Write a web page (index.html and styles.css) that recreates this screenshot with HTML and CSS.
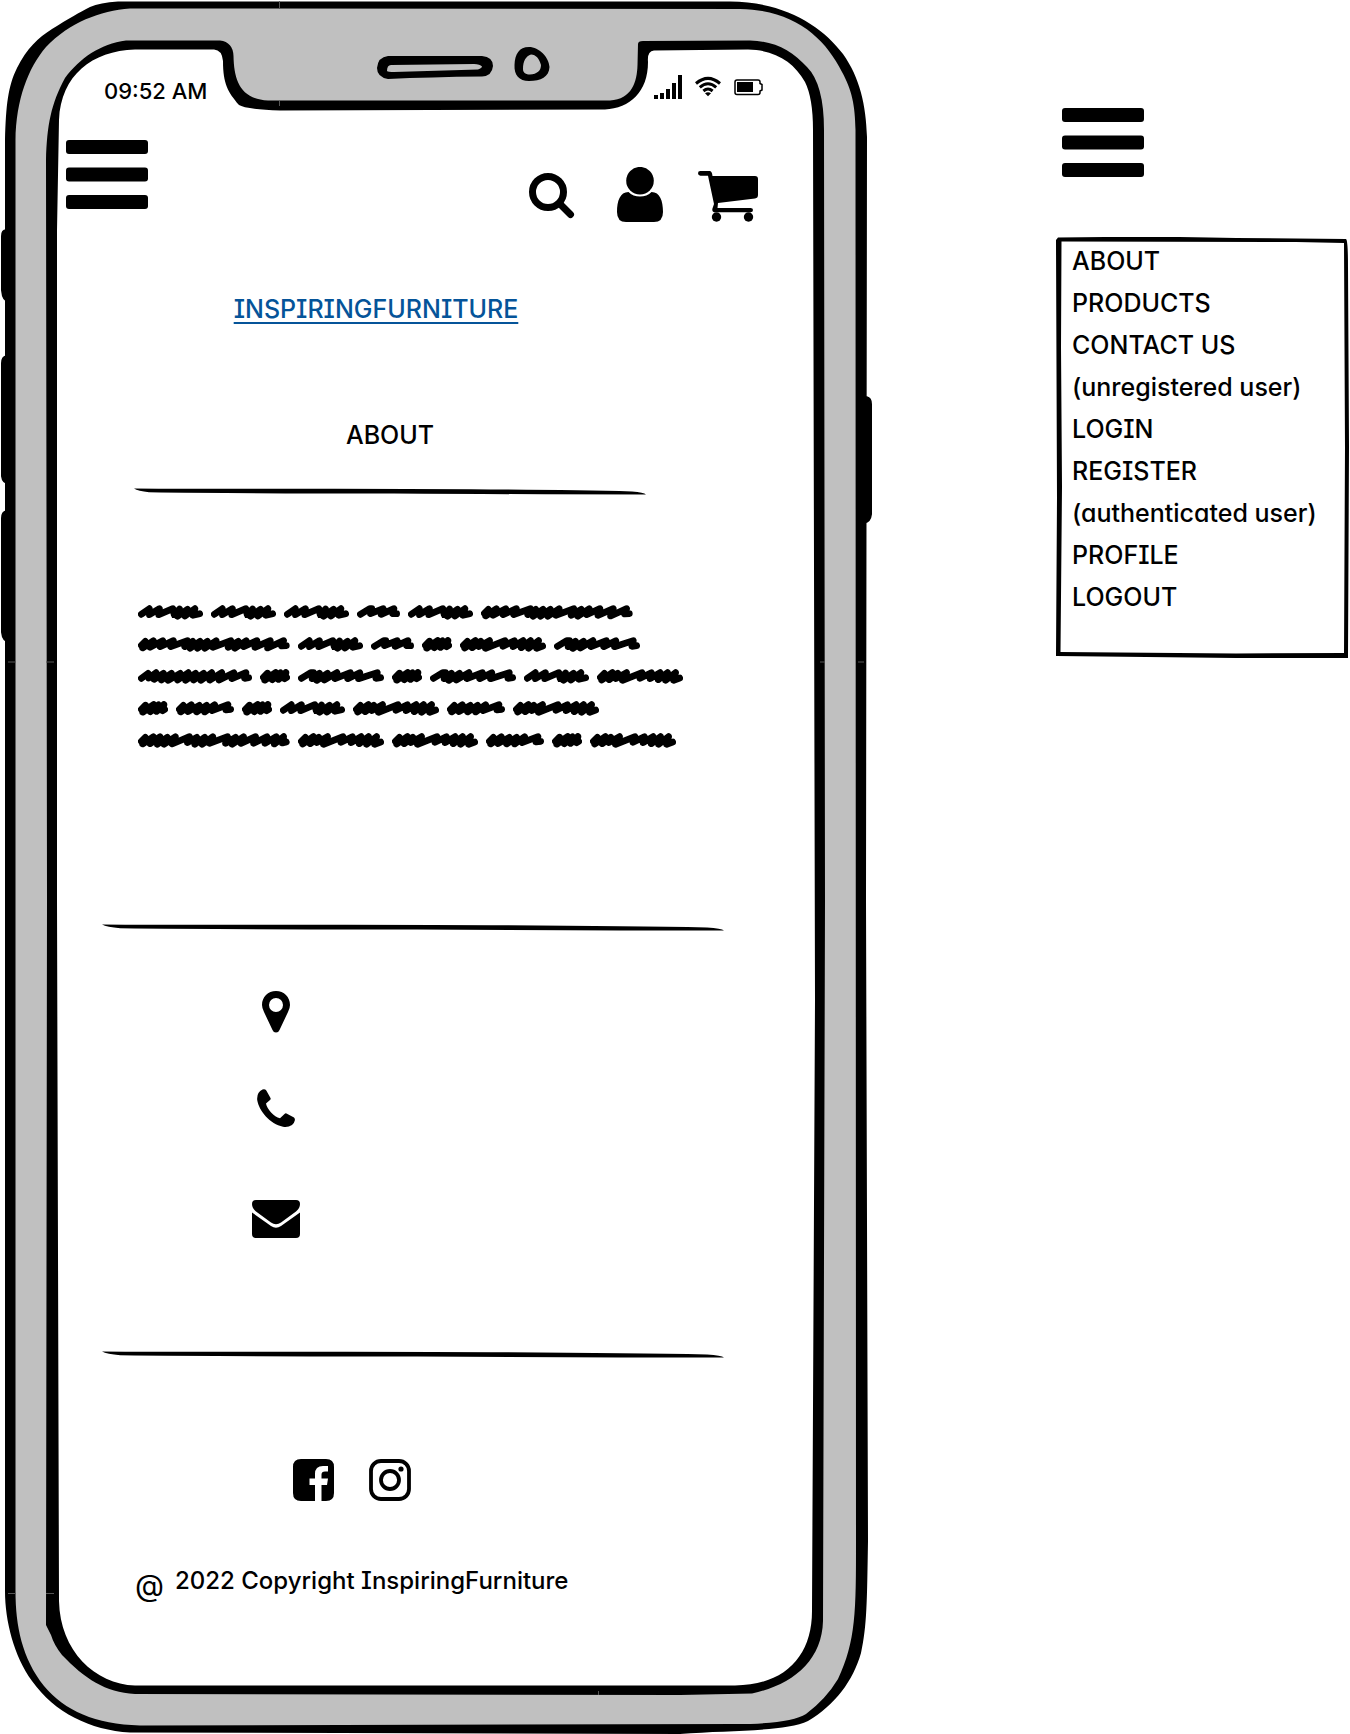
FILE: index.html
```html
<!DOCTYPE html>
<html lang="en">
<head>
<meta charset="utf-8">
<meta name="viewport" content="width=device-width, initial-scale=1">
<title>InspiringFurniture - About</title>
<link rel="stylesheet" href="styles.css">
</head>
<body>
<svg class="defs" aria-hidden="true">
  <symbol id="bars" viewBox="0 0 82 69"><rect width="82" height="14" rx="3"/><rect y="27.500" width="82" height="14" rx="3"/><rect y="55" width="82" height="14" rx="3"/></symbol>
  <symbol id="rule" viewBox="0 0 512 8" preserveAspectRatio="none"><path d="M0 1.500Q20 1.800 200 1.800Q400 2 498 4.500Q510 5.500 512 7.500Q400 7.400 260 6.500Q100 6.400 15 5.300Q4 4 0 1.500Z"/></symbol>
  <symbol id="w30" viewBox="0 0 88 43"><path d="M10 24L22 12L14 32L46 10L36 31L60 11L54 30L76 10L72 28L78 24"/></symbol>
  <symbol id="w43" viewBox="0 0 128 43"><path d="M10 27L38 10L44 10L40 25L78 10L72 27L110 10L106 25L118 25"/></symbol>
  <symbol id="w58" viewBox="0 0 174 43"><path d="M10 24L22 12L14 32L46 10L36 31L70 12L62 32L92 12L86 32L116 10L108 28L156 10L150 26L164 24"/></symbol>
  <symbol id="w65" viewBox="0 0 194 43"><path d="M10 27L34 10L34 28L64 10L62 28L104 10L108 28L124 11L118 33L148 12L140 32L170 10L164 30L184 25"/></symbol>
  <symbol id="w86" viewBox="0 0 256 43"><path d="M10 24L22 12L14 32L46 10L36 31L62 12L56 28L88 10L76 33L134 10L128 27L162 10L158 28L188 10L182 31L210 10L204 33L234 10L228 33L246 26"/></symbol>
  <symbol id="w85" viewBox="0 0 256 43"><path d="M10 27L38 10L46 10L42 28L64 12L56 33L88 12L78 32L116 10L110 28L156 10L148 28L184 10L180 28L236 10L232 27L246 25"/></symbol>
  <symbol id="w114" viewBox="0 0 340 43"><path d="M10 27L30 12L32 26L54 10L48 30L76 12L70 32L100 12L90 33L126 12L118 32L150 10L142 33L172 12L166 32L196 12L188 33L220 10L214 32L250 10L242 32L286 10L280 28L322 10L318 27L330 25"/></symbol>
  <symbol id="w152" viewBox="0 0 455 43"><path d="M10 24L22 12L14 32L46 10L36 30L74 10L66 28L106 10L98 28L148 10L140 28L164 12L156 33L186 12L178 33L208 12L200 33L234 10L224 30L278 10L270 30L300 12L290 33L324 10L316 28L356 10L350 30L396 10L388 32L436 10L430 26L444 25"/></symbol>
  <symbol id="w151" viewBox="0 0 455 43"><path d="M10 24L22 12L14 32L46 10L36 31L66 10L58 33L88 12L78 33L112 10L102 32L154 10L148 28L176 12L170 33L200 12L192 33L224 10L214 30L268 10L262 30L292 12L282 33L316 10L308 30L352 10L346 30L386 10L380 30L414 10L408 32L436 10L432 29L444 26"/></symbol>
</svg>

<div class="page">
  <div class="phone">
    <svg class="frame" viewBox="0 0 873 1734" preserveAspectRatio="none" aria-hidden="true">
      <path d="M9 229H6Q1 229 1 236V290Q2 302 9 302ZM9 355H6Q1 356 1 363V476Q2 484 9 484ZM9 510H6Q1 511 1 518V632Q2 642 9 642ZM864 396H867Q872 397 872 404V514Q871 523 864 523Z"/>
      <path d="M118 1.500L730 1.500C785 2 822 26 843 54C860 78 866 105 867 137L866 900L868 1540C867 1600 867 1625 861 1652C853 1680 835 1704 808 1720C785 1731 730 1729 680 1733L130 1731.500C90 1729 55 1712 32 1680C14 1655 5 1620 5 1590L5 1000L5 140C6 105 8 86 17 68C27 48 38 38 52 29C68 19 80 12 90 7Q100 2.500 118 1.500Z"/>
      <path class="metal" d="M130 8.500L740 9C795 10 825 38 842 72C852 90 855 105 855.500 130L856 1540C856 1610 856 1640 838 1678Q826 1698 806 1713Q790 1723 735 1723L140 1724.500C95 1723 65 1710 44 1685C22 1657 15.500 1625 15.500 1590L15.500 140C16 100 28 68 46 47C70 22 100 11 130 8.500Z"/>
      <path d="M126 40.500L220 40.500Q233 42 233.500 56C234 80 240 99 268 100.500L610 100.500C632 99 637 82 637.500 65L638 44Q638 41 643 41L750 40.500C775 41 792 51 807 67Q824 84 824 130L825 900L823 1620C822 1660 792 1684 752 1692.500L680 1694L135 1693C105 1691 85 1678 62 1654Q54 1644 51 1634L46 1624L47 900L46 160C47 125 51 104 65 78C80 58 100 44 126 40.500Z"/>
      <path class="glass" d="M135 49.500L214 49.500Q222 50 223 61C223 84 228 92 239 105Q245 109 280 110.500L605 109.500C630 108 648 92 648 62Q647 51 654 50.500L748 49.500C775 50 794 62 805 82Q813 98 813 130L815 1000L812 1610C812 1655 785 1684 735 1684.500L135 1684.500C95 1683 60 1650 59 1600L57 900L57 230L59 120C61 75 92 51 135 49.500Z"/>
      <path fill-rule="evenodd" d="M388 56H482Q493 57 493 66Q492 76 482 76.500Q430 77 388 79Q377 77 377 68Q378 57 388 56ZM391 65Q387 65 387 71Q388 72 394 72L478 69.500Q482 68 482 66.500Q480 64 474 64Z"/>
      <path fill-rule="evenodd" d="M529 47C539 47 549 57 549.500 67C549 77 541 81 529 81C519 81 514 75 514.500 65C515 54 519 47 529 47ZM531 54.500C526 56 523 61 523 69C523 73 526 74.500 530 74.500C537 74 541 71 541 65C539 58 536 55 531 54.500Z"/>
      <path class="seam" d="M279.500 1V9M279.500 101V106M8 661.500H16M46 661.500H54M820 661.500H825M858 661.500H864M8 1592.500H16M46 1592.500H54M598.500 1690V1694"/>
    </svg>

    <div class="screen">
      <div class="status">
        <span>09:52 AM</span>
        <div class="status-icons">
          <svg width="28" height="24" viewBox="0 0 28 24" role="img" aria-label="Signal"><path d="M0 20h4v4H0zM6 18h4v6H6zM12 14h4v10h-4zM18 8h4v16h-4zM24 0h4v24h-4z"/></svg>
          <svg width="26" height="24" viewBox="0 0 26 24" role="img" aria-label="Wi-Fi"><g fill="none" stroke="#000" stroke-width="3"><path d="M1 8.500Q13-1.700 25 8.500M4.800 12.300Q13 5.200 21.200 12.300M8.400 16Q13 12 17.600 16"/></g><path d="M13 21.300l-3-3q3-2.300 6 0z"/></svg>
          <svg width="29" height="24" viewBox="0 0 29 24" role="img" aria-label="Battery"><path d="M3 5H24Q26 5 26 7V8.500L28 9.500V15L26 16V17.500Q26 19.500 24 19.500H3Q1 19.500 1 17.500V7Q1 5 3 5Z" fill="none" stroke="#000" stroke-width="1.500"/><path d="M3 7h16v10H3z"/></svg>
        </div>
      </div>

      <header class="topbar">
        <button type="button" aria-label="Menu"><svg width="82" height="69"><use href="#bars"/></svg></button>
        <div class="tools">
          <button type="button" aria-label="Search"><svg width="60" height="55" viewBox="0 0 60 55"><circle cx="26" cy="25" r="15.500" fill="none" stroke="#000" stroke-width="7"/><path d="M38 37L48.500 47.500" stroke="#000" stroke-width="7" stroke-linecap="round"/></svg></button>
          <button type="button" aria-label="Account"><svg width="60" height="55" viewBox="0 0 60 55"><circle cx="30" cy="13.700" r="13.800"/><path d="M18.500 25C24 31 36 31 41.500 25C50 25 53 34 53 45Q53 55 44 55H16Q7 55 7 45C7 34 10 25 18.500 25Z"/></svg></button>
          <button type="button" aria-label="Cart"><svg width="60" height="55" viewBox="0 0 60 55"><path d="M2.500 4H11.500Q14 4 14.500 9H57Q60 9 60 12V28Q60 31 57 31.500L20 36L19.500 41H52.500Q55 41 55 43Q55 45.200 52.500 45.200H16.500Q14 45 14.300 42L16 37L10 8.700H2.500Q0 8.700 0 6.300T2.500 4Z"/><circle cx="18.500" cy="50" r="4.700"/><circle cx="50.500" cy="50" r="4.700"/></svg></button>
        </div>
      </header>

      <main>
        <div class="brand"><a href="#home">INSPIRINGFURNITURE</a></div>
        <section class="about">
          <h1>ABOUT</h1>
          <svg class="rule"><use href="#rule"/></svg>
          <div class="copy" role="img" aria-label="Body text placeholder">
            <div class="line"><svg width="65"><use href="#w65"/></svg><svg width="65"><use href="#w65"/></svg><svg width="65"><use href="#w65"/></svg><svg width="43"><use href="#w43"/></svg><svg width="65"><use href="#w65"/></svg><svg width="152"><use href="#w152"/></svg></div>
            <div class="line"><svg width="152"><use href="#w152"/></svg><svg width="65"><use href="#w65"/></svg><svg width="43"><use href="#w43"/></svg><svg width="30"><use href="#w30"/></svg><svg width="86"><use href="#w86"/></svg><svg width="86"><use href="#w85"/></svg></div>
            <div class="line"><svg width="114"><use href="#w114"/></svg><svg width="30"><use href="#w30"/></svg><svg width="86"><use href="#w85"/></svg><svg width="30"><use href="#w30"/></svg><svg width="86"><use href="#w85"/></svg><svg width="65"><use href="#w65"/></svg><svg width="86"><use href="#w86"/></svg></div>
            <div class="line"><svg width="30"><use href="#w30"/></svg><svg width="58"><use href="#w58"/></svg><svg width="30"><use href="#w30"/></svg><svg width="65"><use href="#w65"/></svg><svg width="86"><use href="#w86"/></svg><svg width="58"><use href="#w58"/></svg><svg width="86"><use href="#w86"/></svg></div>
            <div class="line"><svg width="152"><use href="#w151"/></svg><svg width="86"><use href="#w86"/></svg><svg width="86"><use href="#w86"/></svg><svg width="58"><use href="#w58"/></svg><svg width="30"><use href="#w30"/></svg><svg width="86"><use href="#w86"/></svg></div>
          </div>
        </section>
      </main>

      <footer>
        <svg class="rule"><use href="#rule"/></svg>
        <div class="contact">
          <svg width="48" height="42" viewBox="0 0 48 42" role="img" aria-label="Address"><path fill-rule="evenodd" d="M24 0C32 0 38 6 38 14Q38 17 36 21L27.500 39Q26.500 41.500 24 41.500T20.500 39L12 21Q10 17 10 14C10 6 16 0 24 0ZM24 7A7 7 0 1 0 24 21A7 7 0 1 0 24 7Z"/></svg>
          <svg width="48" height="38" viewBox="0 0 48 38" role="img" aria-label="Phone"><path d="M10.500 .5Q13 -.3 14.300 1.500L18.500 9Q19 10 18 11L14 14.500C15 20 22 28 28 29.200L32.500 25Q33.500 24 34.500 24.500L42 28.500Q43.200 29.500 42.800 31.500Q42 35 40 36Q36 38.500 31 37.700C18 35 7 22 5.200 11Q4.600 3 10.500 .5Z"/></svg>
          <svg width="48" height="38" viewBox="0 0 48 38" role="img" aria-label="Email"><path d="M4 0H44Q48 0 48 4Q48 8 44 11.500L29 22.500Q24 26 19 22.500L4 11.500Q0 8 0 4Q0 0 4 0ZM0 12.500L19 26Q24 29.500 29 26L48 12.500V34Q48 38 44 38H4Q0 38 0 34Z"/></svg>
        </div>
        <svg class="rule"><use href="#rule"/></svg>
        <div class="social">
          <a href="#facebook" aria-label="Facebook"><svg width="41" height="42" viewBox="0 0 41 42"><path d="M8 0H33Q41 0 41 8V34Q41 42 33 42H28.500V26H34L35 19.500H28.500V15.500Q28.500 12.500 32 12.500H35V7H30Q22 7 22 15V19.500H16.500V26H22V42H8Q0 42 0 34V8Q0 0 8 0Z"/></svg></a>
          <a href="#instagram" aria-label="Instagram"><svg width="42" height="42" viewBox="0 0 42 42"><g fill="none" stroke="#000" stroke-width="3.800"><rect x="2" y="2" width="38" height="38" rx="10"/><circle cx="21" cy="21" r="9"/></g><circle cx="32" cy="10" r="2.600"/></svg></a>
        </div>
        <p class="legal"><span class="at">@</span><span>2022 Copyright InspiringFurniture</span></p>
      </footer>
    </div>
  </div>

  <aside class="side">
    <button type="button" aria-label="Menu" aria-expanded="true"><svg width="82" height="69"><use href="#bars"/></svg></button>
    <nav class="menu">
      <svg class="menu-frame" viewBox="0 0 293 421" preserveAspectRatio="none" aria-hidden="true"><path fill-rule="evenodd" d="M2 .5Q110-1 180 1L290 2Q292 3 292 30L293 210L292 421L180 421L0 419L1 260L0 3ZM5.500 4.500L5 110L6 250L4.500 415L180 416.500L288 416L289 210L288 6L240 5Z"/></svg>
      <ul>
        <li><a href="#about">ABOUT</a></li>
        <li><a href="#products">PRODUCTS</a></li>
        <li><a href="#contact">CONTACT US</a></li>
        <li>(unregistered user)</li>
        <li><a href="#login">LOGIN</a></li>
        <li><a href="#register">REGISTER</a></li>
        <li>(authenticated user)</li>
        <li><a href="#profile">PROFILE</a></li>
        <li><a href="#logout">LOGOUT</a></li>
      </ul>
    </nav>
  </aside>
</div>
</body>
</html>
```
FILE: styles.css
```css
* {
  box-sizing: border-box;
}

body {
  margin: 0;
  background: #fff;
  color: #000;
  font-family: Inter, "Liberation Sans", sans-serif;
  font-size: 25px;
  font-weight: 500;
  line-height: 32px;
  /* round single-storey a and serifed capital I */
  font-feature-settings: "cv11", "cv08";
}

svg {
  display: block;
}

.defs {
  position: absolute;
  width: 0;
  height: 0;
}

button {
  display: block;
  padding: 0;
  border: 0;
  background: none;
  cursor: pointer;
}

a {
  color: inherit;
  text-decoration: none;
}

h1,
p,
ul {
  margin: 0;
  padding: 0;
  font-size: inherit;
  font-weight: inherit;
  list-style: none;
}

.page {
  display: grid;
  grid-template-columns: 873fr 477fr;
  align-items: start;
}

/* The outline and the content share one grid cell */
.phone,
.menu {
  display: grid;
}

.phone > *,
.menu > * {
  grid-area: 1 / 1;
  min-width: 0;
}

.frame,
.menu-frame {
  width: 100%;
  height: 100%;
  min-height: 0;
  contain: size;
}

.metal {
  fill: #c0c0c0;
}

.glass {
  fill: #fff;
}

.seam {
  stroke: #555;
  stroke-width: 1;
}

.screen {
  padding: 75px 56px 134px 66px;
}

.status {
  display: flex;
  justify-content: space-between;
  align-items: center;
  height: 32px;
  padding: 0 54px 0 38px;
  font-size: 22px;
}

.status-icons {
  display: flex;
  gap: 13px;
  height: 32px;
}

.topbar {
  display: flex;
  justify-content: space-between;
  align-items: flex-start;
  margin-top: 33px;
  padding-right: 59px;
}

.tools {
  display: flex;
  gap: 28px;
  padding-top: 27px;
}

.brand {
  width: 620px;
  max-width: 100%;
  margin-top: 71px;
  text-align: center;
}

.brand a {
  color: #055499;
  text-decoration: underline;
  text-decoration-thickness: 2px;
  text-underline-offset: 4px;
}

.about {
  width: 512px;
  max-width: 100%;
  margin: 94px 0 0 68px;
}

.about h1 {
  text-align: center;
}

.rule {
  width: 100%;
  height: 8px;
}

.about .rule {
  margin-top: 36px;
}

.copy {
  display: flex;
  flex-direction: column;
  margin-top: 105px;
  padding: 5px 0 0 4px;
}

.line {
  display: flex;
  gap: 8px;
  height: 32px;
}

.line svg {
  flex: none;
  height: 15px;
  fill: none;
  stroke: #000;
  stroke-width: 20;
  stroke-linecap: round;
  stroke-linejoin: round;
}

footer {
  width: 622px;
  max-width: 100%;
  margin: 158px 0 0 36px;
}

.contact {
  display: grid;
  justify-items: start;
  padding: 60px 0 112px 150px;
}

.contact svg + svg {
  margin-top: 56px;
}

.contact svg:last-child {
  margin-top: 73px;
}

.social {
  display: flex;
  gap: 35px;
  margin-top: 101px;
  padding-left: 191px;
}

.legal {
  display: flex;
  gap: 11px;
  margin-top: 64px;
  padding-left: 33px;
  font-size: 24px;
}

.at {
  padding-top: 4px;
  font-size: 30px;
  font-weight: 400;
}

.side {
  padding: 108px 1px 0 183px;
}

.side > button {
  margin-left: 6px;
}

.menu {
  margin-top: 60px;
}

.menu ul {
  padding: 3px 0 40px 16px;
}

.menu li {
  line-height: 42px;
}

@media (max-width: 1000px) {
  .page {
    grid-template-columns: 1fr;
  }

  .side {
    padding: 40px;
  }
}
```
